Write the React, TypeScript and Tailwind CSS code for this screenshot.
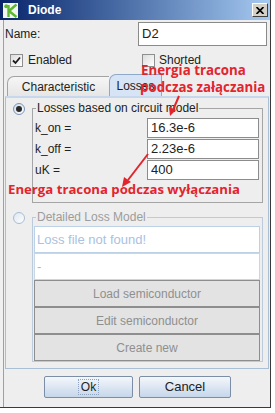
import React from 'react';

// Diode properties dialog — "Losses" tab

function CheckBox({ checked }: { checked?: boolean }) {
  return (
    <div className="w-[13px] h-[13px] border border-[#8e8f8f] bg-gradient-to-br from-[#dcdcdc] to-white flex items-center justify-center">
      {checked && (
        <svg width="9" height="9" viewBox="0 0 9 9">
          <path d="M1 4.5 L3.5 7 L8 1.5" stroke="#1c1c1c" strokeWidth="1.8" fill="none" />
        </svg>
      )}
    </div>
  );
}

function Radio({ checked, disabled }: { checked?: boolean; disabled?: boolean }) {
  return (
    <div
      className={`w-[12px] h-[12px] rounded-full border flex items-center justify-center ${
        disabled
          ? 'border-[#a9bcd2] bg-gradient-to-br from-[#dde6f0] to-white'
          : 'border-[#7a95b5] bg-gradient-to-br from-[#cfdbe9] to-white'
      }`}
    >
      {checked && <div className="w-[6px] h-[6px] rounded-full bg-[#2a2a2a]" />}
    </div>
  );
}

function Field({ value }: { value: string }) {
  return (
    <div className="w-[112px] h-[20px] bg-white border border-[#8c8c8c] flex items-center pl-[3px] text-[13px] text-[#222]">
      {value}
    </div>
  );
}

function DisabledButton({ label }: { label: string }) {
  return (
    <div className="h-[27px] bg-[#e3e3e3] border border-[#8e8e8e] flex items-center justify-center text-[12px] text-[#8f8f8f]">
      {label}
    </div>
  );
}

export default function App() {
  return (
    <div className="w-[275px] h-[413px] bg-white font-['Liberation_Sans',Arial,sans-serif] text-[12px] text-[#222]">
      <div className="relative w-[271px] h-[408px] border-r border-b border-[#3a3a3a] bg-[#f0f0f0] flex flex-col">
        {/* Title bar */}
        <div className="h-[20px] flex items-center pl-[3px] pr-[2px] bg-gradient-to-r from-[#0a246a] to-[#a6caf0]">
          <div className="w-[15px] h-[15px] bg-[#f4f7f0] flex items-center justify-center">
            <svg width="15" height="15" viewBox="0 0 15 15">
              <circle cx="3.2" cy="3.2" r="2" fill="#5fb832" />
              <path d="M5.5 2 L5.5 14" stroke="#5fb832" strokeWidth="2.4" />
              <path d="M6 8 L13.5 1.5" stroke="#5fb832" strokeWidth="2.4" />
              <path d="M6 8 L13.5 14" stroke="#5fb832" strokeWidth="2.4" />
            </svg>
          </div>
          <span className="ml-[10px] text-white font-bold text-[12px]">Diode</span>
          <div className="ml-auto w-[16px] h-[14px] bg-[#d4d0c8] border-t border-l border-white border-r border-b border-r-[#404040] border-b-[#404040] flex items-center justify-center">
            <svg width="8" height="7" viewBox="0 0 8 7">
              <path d="M0.5 0 L7.5 7 M7.5 0 L0.5 7" stroke="#000" strokeWidth="1.7" />
            </svg>
          </div>
        </div>

        {/* Body */}
        <div className="flex-1 ml-[3px] border-l border-[#a0a0a0] bg-[#eeeeee] flex flex-col">
          {/* Name */}
          <div className="mt-[2px] h-[24px] flex items-center">
            <span className="w-[134px] pl-[1px] text-[12px]">Name:</span>
            <div className="w-[129px] h-[24px] bg-white border border-[#8a8a8a] flex items-center pl-[3px] text-[13px]">
              D2
            </div>
          </div>

          {/* Checkboxes */}
          <div className="h-[28px] flex items-center">
            <div className="w-[138px] pl-[6px] flex items-center gap-[5px]">
              <CheckBox checked />
              <span>Enabled</span>
            </div>
            <div className="flex items-center gap-[4px]">
              <CheckBox />
              <span>Shorted</span>
            </div>
          </div>

          {/* Tabs */}
          <div className="h-[22px] flex items-end pl-[3px]">
            <div className="w-[102px] h-[20px] rounded-tl-[7px] border-t border-l border-[#a3a3a3] bg-gradient-to-b from-[#f6f6f6] to-[#e6e6e6] flex items-center justify-center">
              Characteristic
            </div>
            <div className="w-[53px] h-[22px] rounded-tl-[7px] border-t border-l border-r border-[#8fa9c8] bg-[#d6e4f5] flex items-center justify-center">
              Losses
            </div>
          </div>

          {/* Tab panel */}
          <div className="ml-[1px] w-[264px] h-[273px] border border-[#a9bfd6] border-t-[2px] border-t-[#c7d8ed] bg-[#eeeeee] flex flex-col">
            {/* Losses based on circuit model */}
            <div className="mt-[3px] flex items-start">
              <div className="w-[26px] pl-[7px] pt-[2px]">
                <Radio checked />
              </div>
              <fieldset className="w-[231px] border border-[#a5a5a5] pb-[22px]">
                <legend className="ml-[3px] px-[1px] leading-[14px] text-[12px] text-[#222]">
                  Losses based on circuit model
                </legend>
                <div className="pt-[3px] flex flex-col gap-[1px]">
                  {[
                    ['k_on =', '16.3e-6'],
                    ['k_off =', '2.23e-6'],
                    ['uK =', '400'],
                  ].map(([label, value]) => (
                    <div key={label} className="h-[20px] flex items-center pr-[3px]">
                      <span className="flex-1 pl-[2px]">{label}</span>
                      <Field value={value} />
                    </div>
                  ))}
                </div>
              </fieldset>
            </div>

            {/* Detailed Loss Model */}
            <div className="mt-[7px] flex items-start">
              <div className="w-[26px] pl-[7px] pt-[2px]">
                <Radio disabled />
              </div>
              <fieldset className="w-[231px] border border-[#bccbdb]">
                <legend className="ml-[3px] px-[1px] leading-[14px] text-[12px] text-[#9c9c9c]">
                  Detailed Loss Model
                </legend>
                <div className="pt-[2px] pl-[1px] pr-[2px] flex flex-col">
                  <div className="h-[27px] bg-white border border-[#bcd0e6] flex items-center pl-[2px] text-[13px] text-[#a9c2df]">
                    Loss file not found!
                  </div>
                  <div className="h-[27px] bg-white border border-[#c9d6e4] flex items-center pl-[2px] text-[13px] text-[#b5b5b5]">
                    -
                  </div>
                  <DisabledButton label="Load semiconductor" />
                  <DisabledButton label="Edit semiconductor" />
                  <DisabledButton label="Create new" />
                </div>
              </fieldset>
            </div>
          </div>

          {/* Dialog buttons */}
          <div className="mt-[7px] pl-[40px] flex gap-[6px]">
            <div className="w-[89px] h-[22px] rounded-[2px] border border-[#7a8ea8] bg-gradient-to-b from-[#f4f7fb] to-[#c6d6ea] flex items-center justify-center">
              <span className="px-[2px] border border-dotted border-[#8ea4c0] leading-[14px]">Ok</span>
            </div>
            <div className="w-[92px] h-[22px] rounded-[2px] border border-[#7a8ea8] bg-gradient-to-b from-[#f4f7fb] to-[#c6d6ea] flex items-center justify-center text-[13px]">
              Cancel
            </div>
          </div>
        </div>

        {/* Red annotations drawn over the dialog */}
        <div className="absolute left-[141px] top-[62px] font-['Open_Sans',sans-serif] font-bold text-[13.3px] leading-[17px] text-[#e2252d] whitespace-nowrap">
          <div>Energia tracona</div>
          <div className="-ml-[1px]">podczas załączania</div>
        </div>
        <div className="absolute left-[8px] top-[181px] font-['Open_Sans',sans-serif] font-bold text-[13.2px] leading-[17px] text-[#e2252d] whitespace-nowrap">
          Energa tracona podczas wyłączania
        </div>
        <svg className="absolute left-0 top-0 pointer-events-none" width="271" height="408">
          <path d="M179 96 L173 110" stroke="#e2252d" strokeWidth="2" />
          <polygon points="170,116 169,107 176,110" fill="#e2252d" />
          <path d="M148 154 L128 180" stroke="#e2252d" strokeWidth="2" />
          <polygon points="122,187 124,177 131,182" fill="#e2252d" />
        </svg>
      </div>
    </div>
  );
}
